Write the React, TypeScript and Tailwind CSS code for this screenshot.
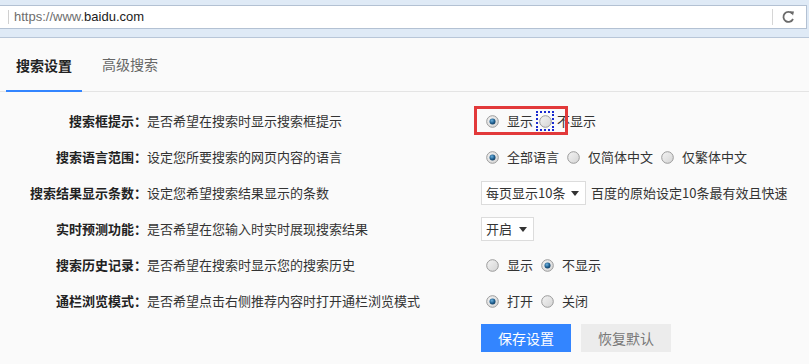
import React from 'react';

const cjk = "font-['Noto_Sans_CJK_SC','Noto_Sans',sans-serif]";

const Radio: React.FC<{ checked?: boolean }> = ({ checked }) => (
  <svg width="13" height="13" viewBox="0 0 13 13" className="shrink-0">
    <defs>
      <linearGradient id="rg" x1="0" y1="0" x2="1" y2="1">
        <stop offset="0" stopColor="#f4f4f4" />
        <stop offset="1" stopColor="#d4d4d4" />
      </linearGradient>
      <radialGradient id="dot" cx="0.4" cy="0.35" r="0.7">
        <stop offset="0" stopColor="#6fb3e0" />
        <stop offset="0.6" stopColor="#1f5f8f" />
        <stop offset="1" stopColor="#123a5c" />
      </radialGradient>
    </defs>
    <circle cx="6.5" cy="6.5" r="5.8" fill="url(#rg)" stroke="#9a9a9a" strokeWidth="1" />
    {checked && <circle cx="6.5" cy="6.5" r="3" fill="url(#dot)" />}
  </svg>
);

const Option: React.FC<{ checked?: boolean; label: string; focus?: boolean }> = ({ checked, label, focus }) => (
  <label className="flex items-center mr-[3px]">
    {focus ? (
      <span className="mr-[3px] flex h-[20px] w-[18px] items-center justify-center border-2 border-dotted border-[#1a2bd0]">
        <Radio checked={checked} />
      </span>
    ) : (
      <span className="ml-[5px] mr-[8px] flex">
        <Radio checked={checked} />
      </span>
    )}
    <span>{label}</span>
  </label>
);

const Select: React.FC<{ value: string; w: string }> = ({ value, w }) => (
  <div className={`flex h-[24px] items-center justify-between border border-[#dcdcdc] bg-white pl-[4px] pr-[6px] ${w}`}>
    <span>{value}</span>
    <svg width="8" height="5" viewBox="0 0 8 5">
      <path d="M0 0h8L4 5z" fill="#333" />
    </svg>
  </div>
);

const rows = [
  { label: '搜索框提示：', desc: '是否希望在搜索时显示搜索框提示' },
  { label: '搜索语言范围：', desc: '设定您所要搜索的网页内容的语言' },
  { label: '搜索结果显示条数：', desc: '设定您希望搜索结果显示的条数' },
  { label: '实时预测功能：', desc: '是否希望在您输入时实时展现搜索结果' },
  { label: '搜索历史记录：', desc: '是否希望在搜索时显示您的搜索历史' },
  { label: '通栏浏览模式：', desc: '是否希望点击右侧推荐内容时打开通栏浏览模式' },
];

export default function App() {
  const controls: React.ReactNode[] = [
    <div className="relative flex h-[28px] items-center">
      <Option checked label="显示" />
      <Option focus label="不显示" />
      {/* red annotation box */}
      <div className="absolute left-[-7px] top-[-1px] h-[29px] w-[94px] border-[3px] border-[#e2393a]" />
    </div>,
    <div className="flex items-center">
      <Option checked label="全部语言" />
      <Option label="仅简体中文" />
      <Option label="仅繁体中文" />
    </div>,
    <div className="flex items-center gap-[5px]">
      <Select value="每页显示10条" w="w-[105px]" />
      <span>百度的原始设定10条最有效且快速</span>
    </div>,
    <div className="flex items-center">
      <Select value="开启" w="w-[53px]" />
    </div>,
    <div className="flex items-center">
      <Option label="显示" />
      <Option checked label="不显示" />
    </div>,
    <div className="flex items-center">
      <Option checked label="打开" />
      <Option label="关闭" />
    </div>,
  ];

  return (
    <div className={`h-[364px] w-[809px] overflow-hidden bg-[#fafafa] text-[13px] text-[#333] ${cjk}`}>
      {/* browser address bar */}
      <div className="h-[38px] border-b border-[#b8c6d8] bg-[#dfeaf6] pt-[5px]">
        <div className="mr-[2px] flex h-[24px] items-center border-y border-r border-[#b3c1d3] bg-white">
          <span className="ml-[8px] h-[14px] w-px bg-[#d0d0d0]" />
          <span className="ml-[5px] font-['Liberation_Sans',sans-serif] text-[13px] text-[#6d6d6d]">
            https://www.<span className="text-[#1a1a1a]">baidu.com</span>
          </span>
          <span className="ml-auto h-[16px] w-px bg-[#d6d6d6]" />
          <svg width="33" height="22" viewBox="0 0 33 22">
            <path d="M19.2 7.6A5 5 0 1 0 20 13" fill="none" stroke="#6b6b6b" strokeWidth="1.8" />
            <path d="M16.8 5.2l4.2 0.4-1 4z" fill="#6b6b6b" />
          </svg>
        </div>
      </div>

      {/* tabs */}
      <div className="flex h-[54px] items-end border-b border-[#e4e4e4] pl-[6px]">
        <div className="-mb-px flex h-[53px] items-center border-b-2 border-[#3385ff] px-[10px] pt-[1px] text-[14px] font-bold text-[#222]">
          搜索设置
        </div>
        <div className="ml-[10px] flex h-[53px] items-center px-[10px] pb-[1px] text-[14px] text-[#666]">
          高级搜索
        </div>
      </div>

      {/* settings */}
      <div className="pt-[11px]">
        {rows.map((r, i) => (
          <div key={r.label} className="grid h-[36px] grid-cols-[147px_334px_1fr] items-center">
            <div className="text-right font-bold text-[#222]">{r.label}</div>
            <div>{r.desc}</div>
            <div>{controls[i]}</div>
          </div>
        ))}
        <div className="mt-[5px] flex gap-[10px] pl-[481px]">
          <button className="h-[28px] w-[90px] bg-[#3385ff] text-[14px] text-white">保存设置</button>
          <button className="h-[28px] w-[90px] bg-[#ececec] text-[14px] text-[#777]">恢复默认</button>
        </div>
      </div>
    </div>
  );
}
